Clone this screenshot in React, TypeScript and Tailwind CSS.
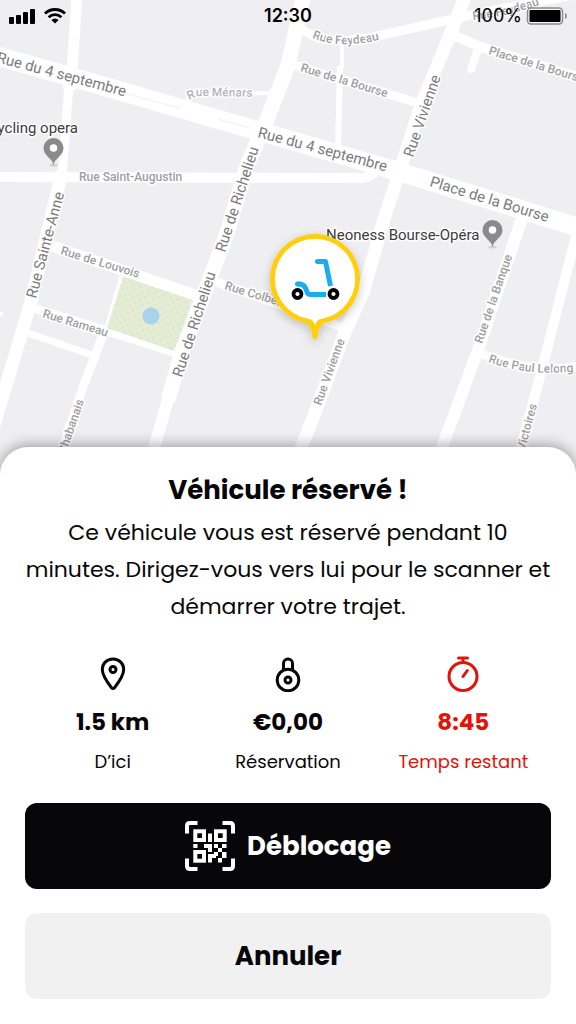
import React from "react";

type Label = { x: number; y: number; angle: number; text: string; size: number; end?: boolean };

const majorLabels: Label[] = [
  { x: -4, y: 62, angle: 15, text: "Rue du 4 septembre", size: 15 },
  { x: 257, y: 137, angle: 15, text: "Rue du 4 septembre", size: 15 },
  { x: 429, y: 186, angle: 17, text: "Place de la Bourse", size: 15 },
  { x: 413, y: 158, angle: -71, text: "Rue Vivienne", size: 15 },
  { x: 225, y: 253, angle: -72, text: "Rue de Richelieu", size: 15 },
  { x: 182, y: 378, angle: -72, text: "Rue de Richelieu", size: 15 },
  { x: 36, y: 299, angle: -75, text: "Rue Sainte-Anne", size: 15 },
];

const minorLabels: Label[] = [
  { x: 300, y: 71, angle: 17, text: "Rue de la Bourse", size: 12 },
  { x: 488, y: 54, angle: 17, text: "Place de la Bourse", size: 12 },
  { x: 79, y: 181, angle: 0, text: "Rue Saint-Augustin", size: 12 },
  { x: 60, y: 254, angle: 17, text: "Rue de Louvois", size: 12 },
  { x: 42, y: 317, angle: 17, text: "Rue Rameau", size: 12 },
  { x: 84, y: 401, angle: -71, text: "Rue Chabanais", size: 12, end: true },
  { x: 224, y: 289, angle: 17, text: "Rue Colbert", size: 12 },
  { x: 321, y: 406, angle: -70, text: "Rue Vivienne", size: 12 },
  { x: 482, y: 344, angle: -71, text: "Rue de la Banque", size: 12 },
  { x: 537, y: 405, angle: -75, text: "Rue des Victoires", size: 12, end: true },
];

const roads: { d: string; w: number }[] = [
  { d: "M-10 54L72 77L255 130L400 172L590 231", w: 19 },
  { d: "M77 -5L72 70", w: 11 },
  { d: "M71 66L69 90", w: 13 },
  { d: "M69 86L62 175", w: 9 },
  { d: "M62 172L50 222L30 305L10 372L-12 445", w: 13 },
  { d: "M-5 177L362 178Q371 178 378 168", w: 10 },
  { d: "M304 -5L288 65L268 117L246 168L228 230L207 286L182 352L168 400", w: 15 },
  { d: "M169 396L152 455", w: 12 },
  { d: "M186 100L198 94L270 93", w: 4 },
  { d: "M290 24L318 38Q342 44 378 36L448 20L500 9L580 -6", w: 9 },
  { d: "M290 64L418 103", w: 9 },
  { d: "M342 42V68", w: 4 },
  { d: "M340 66L338 148", w: 6 },
  { d: "M467 -8L451 32L421 105L400 170L383 222L364 290L343 337L318 405L298 456", w: 13 },
  { d: "M455 36L481 47L580 78", w: 10 },
  { d: "M52 246L198 296", w: 11 },
  { d: "M30 307L177 353", w: 9 },
  { d: "M25 332L92 355", w: 7 },
  { d: "M122 274L105 333", w: 4 },
  { d: "M104 332L83 387L60 456", w: 9 },
  { d: "M-4 314H3", w: 5 },
  { d: "M211 280L342 327", w: 9 },
  { d: "M522 218L478 350L438 458", w: 12 },
  { d: "M476 352L500 360Q541 374 580 366", w: 9 },
  { d: "M577 232L543 365L518 458", w: 10 },
];

function StreetLabels({ labels, fill }: { labels: Label[]; fill: string }) {
  return (
    <g fill={fill}>
      {labels.map((l, i) => (
        <text
          key={i}
          fontSize={l.size}
          textAnchor={l.end ? "end" : "start"}
          transform={`translate(${l.x} ${l.y}) rotate(${l.angle})`}
        >
          {l.text}
        </text>
      ))}
    </g>
  );
}

function PoiPin({ x, y }: { x: number; y: number }) {
  return (
    <g transform={`translate(${x} ${y})`}>
      <ellipse cx="0" cy="16" rx="4" ry="1.5" fill="#d2d2d4" />
      <path d="M0 16C-1 9 -10 7 -10 -1A10 10 0 0 1 10 -1C10 7 1 9 0 16Z" fill="#8a8a8a" />
      <circle cx="0" cy="-1" r="3.8" fill="#fff" />
    </g>
  );
}

function ScooterMarker() {
  return (
    <g>
      <g filter="url(#markerShadow)" fill="#ffce0f">
        <circle cx="315" cy="279" r="45" />
        <path d="M299 320Q310 322 311.800 333L312.200 336.500Q313 339.500 315 339.500Q317 339.500 317.800 336.500L318.200 333Q320 322 331 320Z" />
      </g>
      <circle cx="315" cy="279" r="40.200" fill="#fff" />
      <path d="M308 318Q313.500 320 315 325Q316.500 320 322 318Z" fill="#fff" />
      <g fill="none" stroke="#18aeee" strokeWidth="5">
        <path d="M317.500 261.500H325.500L330.500 286" strokeLinejoin="round" />
        <path d="M317.500 261.500H320" strokeLinecap="round" />
        <path d="M297.500 284H299C304 284 305.500 287 306.500 290.500Q307.500 294.500 310 294.500H326" strokeLinejoin="round" />
        <path d="M297.500 284H299" strokeLinecap="round" />
      </g>
      <g fill="#fff" stroke="#000" strokeWidth="3.800">
        <circle cx="297.500" cy="294" r="4" />
        <circle cx="333.500" cy="294" r="4" />
      </g>
    </g>
  );
}

function CityMap() {
  return (
    <svg viewBox="0 0 576 479" className="block w-full bg-[#efeef1]" role="img" aria-label="Carte">
      <defs>
        <filter id="markerShadow" x="-30%" y="-30%" width="160%" height="160%">
          <feDropShadow dx="0" dy="3" stdDeviation="5" floodColor="#000" floodOpacity="0.220" />
        </filter>
        <pattern id="parkDots" width="8" height="8" patternUnits="userSpaceOnUse" patternTransform="rotate(18)">
          <circle cx="2" cy="2" r="0.600" fill="#b9c3ad" />
          <circle cx="6" cy="6" r="0.600" fill="#b9c3ad" />
        </pattern>
        <path id="feydeau" d="M312 38Q343 51 390 37" />
        <path id="feydeauTop" d="M473 20Q508 17 550 1" />
        <path id="menars" d="M189 100L198 96L270 97" />
        <path id="lelong" d="M488 362Q530 377 580 371" />
      </defs>
      <rect width="576" height="479" fill="#efeef1" />
      <g fill="none" stroke="#fff" strokeLinejoin="round">
        {roads.map((r, i) => (
          <path key={i} d={r.d} strokeWidth={r.w} />
        ))}
        <path d="M479 46L471 69" strokeWidth="8" strokeLinecap="round" />
      </g>
      <path d="M123 277L192 300L174 351L107 328Z" fill="#e4ecd4" />
      <path d="M123 277L192 300L174 351L107 328Z" fill="url(#parkDots)" />
      <circle cx="151" cy="316" r="8.500" fill="#a8d3ec" />
      <path d="M127 94L180 108M218 119L250 128" stroke="#f1f0f2" strokeWidth="1" />
      <g
        fontFamily="Roboto, sans-serif"
        stroke="#fff"
        strokeWidth="3"
        strokeLinejoin="round"
        paintOrder="stroke"
      >
        <g fontWeight="500">
          <StreetLabels labels={minorLabels} fill="#a0a0a0" />
        </g>
        <g fontSize="12" fontWeight="500" fill="#a0a0a0">
          <text><textPath href="#feydeau">Rue Feydeau</textPath></text>
          <text><textPath href="#feydeauTop">Rue Feydeau</textPath></text>
          <text fill="#b4b4b4"><textPath href="#menars">Rue Ménars</textPath></text>
          <text><textPath href="#lelong">Rue Paul Lelong</textPath></text>
        </g>
        <StreetLabels labels={majorLabels} fill="#7c7c7c" />
        <g fontSize="15" fill="#3c3c3c">
          <text x="78" y="133" textAnchor="end">ycling opera</text>
          <text x="326" y="240">Neoness Bourse-Opéra</text>
        </g>
      </g>
      <PoiPin x={53.5} y={149} />
      <PoiPin x={492.5} y={231} />
      <ScooterMarker />
    </svg>
  );
}

function StatusBar() {
  return (
    <header className="absolute inset-x-0 top-0 grid h-8 grid-cols-3 items-center px-2 font-[Inter,sans-serif] text-lg leading-8 text-black">
      <div className="flex items-center gap-2">
        <svg width="28" height="18" viewBox="0 0 28 18" aria-hidden="true">
          <rect x="1" y="10" width="5" height="7" rx="1" />
          <rect x="8" y="8" width="5" height="9" rx="1" />
          <rect x="15" y="5" width="5" height="12" rx="1" />
          <rect x="22" y="2" width="5" height="15" rx="1" />
        </svg>
        <svg width="22" height="16" viewBox="0 0 22 16" aria-hidden="true">
          <g fill="none" stroke="#000" strokeWidth="2.800">
            <path d="M1 5.500A14.500 14.500 0 0 1 21 5.500" />
            <path d="M4.600 9.200A9.300 9.300 0 0 1 17.400 9.200" />
          </g>
          <path d="M11 15.500L7.300 12A5.300 5.300 0 0 1 14.700 12Z" />
        </svg>
      </div>
      <time className="text-center font-semibold">12:30</time>
      <div className="flex items-center justify-end gap-1">
        <span>100%</span>
        <svg width="42" height="18" viewBox="0 0 42 18" aria-hidden="true">
          <rect x="1.500" y="1" width="35" height="16" rx="3.500" fill="#fff" fillOpacity="0.400" stroke="#8b8b8b" strokeWidth="1.500" />
          <rect x="3.500" y="3" width="31" height="12" rx="1" fill="#000" />
          <path d="M39 6C41.500 7 41.500 11 39 12Z" fill="#8b8b8b" />
        </svg>
      </div>
    </header>
  );
}

const iconProps = {
  viewBox: "0 0 36 36",
  fill: "none",
  stroke: "currentColor",
  strokeWidth: 3,
  strokeLinecap: "round" as const,
  strokeLinejoin: "round" as const,
  className: "size-9",
  "aria-hidden": true,
};

const PinIcon = () => (
  <svg {...iconProps}>
    <path d="M18 3C11.500 3 7.300 7.800 7.300 13.500C7.300 19 12.500 26.500 16.300 31.500Q18 33.500 19.700 31.500C23.500 26.500 28.700 19 28.700 13.500C28.700 7.800 24.500 3 18 3Z" />
    <circle cx="18" cy="13.500" r="3" />
  </svg>
);

const LockIcon = () => (
  <svg {...iconProps}>
    <circle cx="18" cy="24" r="10.800" />
    <path d="M13.500 13.500V7.500A4.500 4.500 0 0 1 22.500 7.500V13.500" />
    <circle cx="18" cy="24" r="3" />
  </svg>
);

const TimerIcon = () => (
  <svg {...iconProps}>
    <circle cx="18" cy="20.500" r="14" />
    <path d="M13.500 2H22.500M18 2V6M18 20.500L22.300 14.500" />
  </svg>
);

const QrIcon = () => (
  <svg viewBox="0 0 50 50" className="size-[50px]" fill="#fff" aria-hidden="true">
    <g fill="none" stroke="#fff" strokeWidth="4">
      <path d="M2 12.500V5Q2 2 5 2H12.500M37.500 2H45Q48 2 48 5V12.500M48 37.500V45Q48 48 45 48H37.500M12.500 48H5Q2 48 2 45V37.500" />
      <rect x="10.300" y="10.300" width="8.700" height="8.700" />
      <rect x="31" y="10.300" width="8.700" height="8.700" />
      <rect x="10.300" y="31" width="8.700" height="8.700" />
    </g>
    <path d="M23 12.500H27V21H23ZM8.300 23H12.500V27H8.300ZM19 23H27V31H23V27H19ZM29 23H33V27H29ZM37 23H41.500V27H37ZM33 27H37V31H33ZM29 31H33V35H31V37H27V41.500H23V33H29ZM37 31H41.500V37H37ZM33 37H37V41.500H33Z" />
  </svg>
);

const stats = [
  { Icon: PinIcon, value: "1.5 km", label: "D’ici", tone: "text-[#070709]" },
  { Icon: LockIcon, value: "€0,00", label: "Réservation", tone: "text-[#070709]" },
  { Icon: TimerIcon, value: "8:45", label: "Temps restant", tone: "text-[#e3120b]" },
];

export default function App() {
  return (
    <main className="relative flex min-h-screen flex-col bg-white font-[Poppins,Inter,sans-serif] text-[#070709]">
      <CityMap />
      <StatusBar />
      <section className="relative -mt-8 flex-1 rounded-t-[28px] bg-white px-[25px] pt-[25px] pb-6 text-center shadow-[0_-2px_14px_rgba(0,0,0,0.35)]">
        <h1 className="text-[26px] leading-9 font-bold">Véhicule réservé !</h1>
        <p className="mt-1.5 text-[22px] leading-[37px]">
          Ce véhicule vous est réservé pendant 10
          <br />
          minutes. Dirigez-vous vers lui pour le scanner et
          <br />
          démarrer votre trajet.
        </p>
        <ul className="mt-[31px] grid grid-cols-3">
          {stats.map(({ Icon, value, label, tone }) => (
            <li key={label} className={`flex flex-col items-center ${tone}`}>
              <Icon />
              <strong className="mt-3 text-[23px] leading-9 font-bold">{value}</strong>
              <span className="mt-2 text-lg leading-7">{label}</span>
            </li>
          ))}
        </ul>
        <div className="mt-[27px] flex flex-col gap-6">
          <button
            type="button"
            className="flex h-[86px] items-center justify-center gap-3 rounded-xl bg-[#070709] text-[26px] font-bold text-white"
          >
            <QrIcon />
            Déblocage
          </button>
          <button type="button" className="h-[86px] rounded-xl bg-[#f1f1f1] text-[26px] font-bold">
            Annuler
          </button>
        </div>
      </section>
    </main>
  );
}
